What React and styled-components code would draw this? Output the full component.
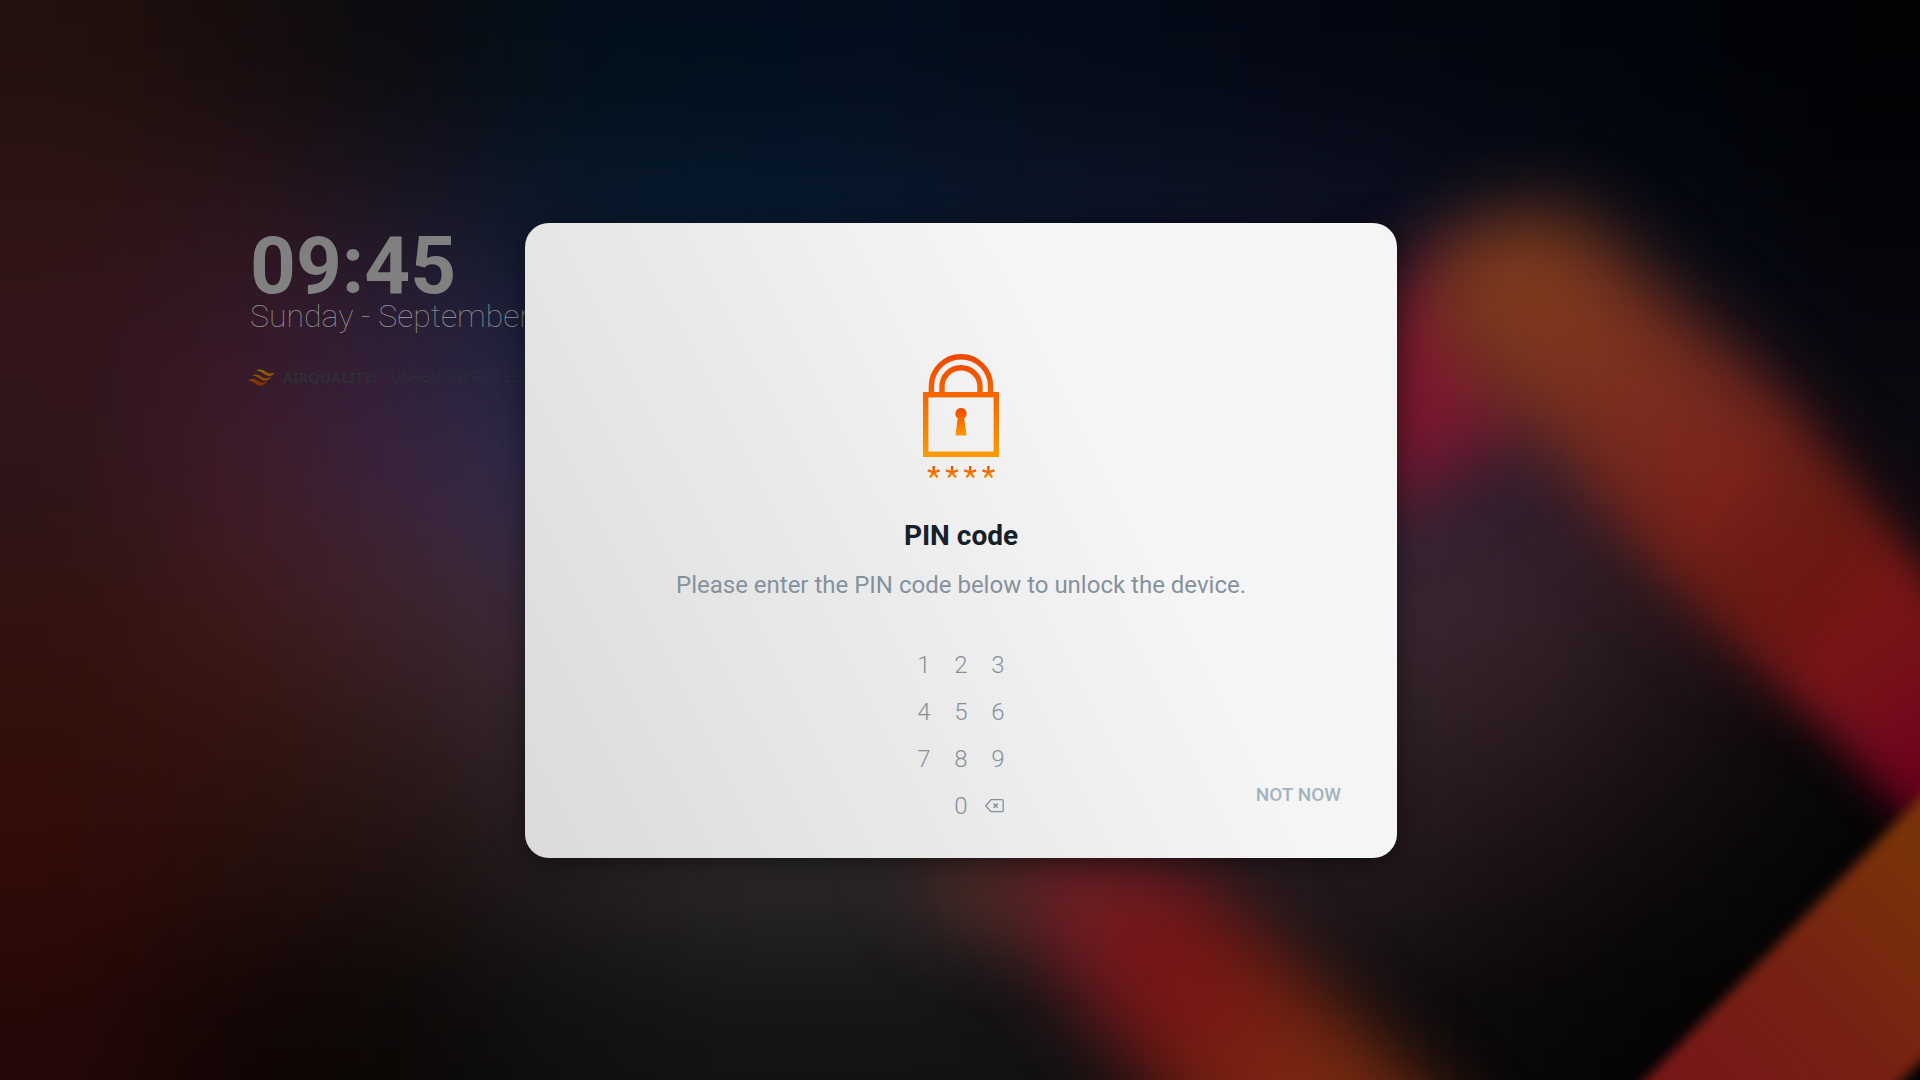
import React, { useState } from 'react';
import styled, { createGlobalStyle } from 'styled-components';

const GlobalStyle = createGlobalStyle`
  * {
    box-sizing: border-box;
  }

  body {
    margin: 0;
    background: #050405;
    font-family: Roboto, sans-serif;
  }
`;

const Screen = styled.div`
  position: relative;
  min-height: 100vh;
  overflow: hidden;
`;

const Wallpaper = styled.svg`
  position: absolute;
  inset: 0;
  width: 100%;
  height: 100%;
`;

const StatusPanel = styled.header`
  position: relative;
  padding: 226px 250px 0;
  white-space: nowrap;
`;

const Clock = styled.time`
  display: block;
  font-size: 80px;
  font-weight: 700;
  line-height: 72px;
  padding: 4px 0 0;
  color: #808080;
`;

const Today = styled.p`
  margin: 0;
  font-size: 32px;
  font-weight: 100;
  line-height: 28px;
  color: #8c8c8c;
`;

const AirQuality = styled.div`
  display: flex;
  align-items: center;
  margin-top: 35px;
  margin-left: -3px;
  font-family: 'Noto Sans', sans-serif;
  line-height: 24px;
  color: #2c3038;
`;

const AirLabel = styled.strong`
  margin: 0 14px 0 8px;
  font-size: 15px;
  font-weight: 600;
`;

const AirValue = styled.span`
  font-size: 14px;
  font-weight: 300;
`;

const Overlay = styled.main`
  position: absolute;
  inset: 0;
  display: flex;
  align-items: center;
  justify-content: center;
  padding: 1px 0 0 2px;
`;

const Dialog = styled.section`
  display: flex;
  flex-direction: column;
  align-items: center;
  width: 100%;
  max-width: 872px;
  padding: 131px 0 29px;
  border-radius: 24px;
  background: linear-gradient(63deg, #dadada 0%, #e8e8e8 34%, #f5f5f5 66%);
  box-shadow: 0 4px 30px rgba(0, 0, 0, 0.5);
`;

const Title = styled.h1`
  margin: 42px 0 0;
  font-size: 28px;
  font-weight: 700;
  line-height: 32px;
  color: #17202a;
`;

const Description = styled.p`
  margin: 19px 0 0;
  font-size: 24px;
  line-height: 28px;
  text-align: center;
  color: #85929e;
`;

const DialogFooter = styled.div`
  display: grid;
  grid-template-columns: 1fr auto 1fr;
  width: 100%;
  margin-top: 42px;
`;

const Keypad = styled.div`
  display: grid;
  grid-template-columns: repeat(3, 37px);
  grid-column: 2;
`;

const Key = styled.button`
  display: flex;
  align-items: center;
  justify-content: center;
  height: 47px;
  padding: 0;
  border: none;
  background: none;
  font-family: inherit;
  font-size: 24px;
  font-weight: 300;
  line-height: 28px;
  color: #85929e;
  cursor: pointer;
`;

const ZeroKey = styled(Key)`
  grid-column: 2;
`;

const DeleteKey = styled(Key)`
  justify-content: flex-end;
  padding-right: 13px;
`;

const DismissButton = styled.button`
  align-self: end;
  justify-self: end;
  margin: 0 56px 22px 0;
  padding: 0;
  border: none;
  background: none;
  font-family: inherit;
  font-size: 19px;
  font-weight: 500;
  line-height: 24px;
  color: #a5b3c1;
  cursor: pointer;
`;

const DIGITS = [1, 2, 3, 4, 5, 6, 7, 8, 9];

// Twelve by eight colour patches, blurred together into the wallpaper base
const PATCHES = [
  ['22110d', '170d0d', '0b0b10', '02101a', '020e1c', '030e1e', '040b18', '040916', '040711', '02060e', '01040a', '010204'],
  ['2f1413', '2a151a', '1b1524', '081829', '051a2e', '08182c', '0c1528', '0e1325', '0c1020', '080c18', '050811', '020408'],
  ['32151a', '37182a', '2e2038', '1a2240', '101e3a', '0e1a34', '0e1730', '10142a', '12142a', '181426', '0c0e18', '07080f'],
  ['2e161a', '3f1c2a', '3a2440', '2e2c4c', '2a2a48', '2a2840', '282438', '2a2034', '2e2034', '2f1f30', '1c141e', '0e0a12'],
  ['32130f', '3d1a1a', '3e242c', '3b2b3e', '34283a', '342834', '342630', '382832', '3c2a36', '36222c', '24161c', '100b0c'],
  ['330f0b', '32130e', '2e1a1a', '31252b', '30282e', '302a2e', '30282c', '2f2228', '2e1f25', '2a1a20', '180f12', '080607'],
  ['320b08', '240f0c', '1d1110', '221b1c', '2c282a', '2c282a', '241e20', '261c20', '241a1e', '180f12', '0c090a', '040404'],
  ['240807', '110504', '0b0806', '101010', '141213', '141213', '131112', '121010', '0f0d0d', '090707', '040303', '030303'],
];

function Patches() {
  return PATCHES.map((row, rowIndex) =>
    row.map((color, colIndex) => {
      const left = colIndex === 0 ? -300 : colIndex * 160;
      const right = colIndex === 11 ? 2220 : (colIndex + 1) * 160;
      const top = rowIndex === 0 ? -300 : rowIndex * 135;
      const bottom = rowIndex === 7 ? 1380 : (rowIndex + 1) * 135;
      return (
        <rect
          key={`${rowIndex}-${colIndex}`}
          x={left}
          y={top}
          width={right - left}
          height={bottom - top}
          fill={`#${color}`}
          shapeRendering="crispEdges"
        />
      );
    })
  );
}

function Background() {
  return (
    <Wallpaper viewBox="0 0 1920 1080" preserveAspectRatio="xMidYMid slice" aria-hidden="true">
      <defs>
        <filter id="haze" filterUnits="userSpaceOnUse" x="-300" y="-300" width="2520" height="1680" colorInterpolationFilters="sRGB">
          <feGaussianBlur stdDeviation="66" />
        </filter>
        <filter id="soft" filterUnits="userSpaceOnUse" x="600" y="0" width="1600" height="1400" colorInterpolationFilters="sRGB">
          <feGaussianBlur stdDeviation="38" />
        </filter>
        <filter id="mid" filterUnits="userSpaceOnUse" x="600" y="0" width="1600" height="1400" colorInterpolationFilters="sRGB">
          <feGaussianBlur stdDeviation="20" />
        </filter>
        <filter id="edge" filterUnits="userSpaceOnUse" x="1300" y="500" width="900" height="900" colorInterpolationFilters="sRGB">
          <feGaussianBlur stdDeviation="6" />
        </filter>
        <linearGradient id="ribbon" gradientUnits="userSpaceOnUse" x1="1540" y1="240" x2="1925" y2="790">
          <stop offset="0" stopColor="#803c1c" />
          <stop offset="0.3" stopColor="#7c2c20" />
          <stop offset="0.62" stopColor="#781b14" />
          <stop offset="0.82" stopColor="#76121a" />
          <stop offset="1" stopColor="#6c001c" />
        </linearGradient>
        <linearGradient id="corner" gradientUnits="userSpaceOnUse" x1="1920" y1="860" x2="1680" y2="1090">
          <stop offset="0" stopColor="#7a320a" />
          <stop offset="0.5" stopColor="#762212" />
          <stop offset="1" stopColor="#771719" />
        </linearGradient>
        <linearGradient id="lower" gradientUnits="userSpaceOnUse" x1="1040" y1="880" x2="1330" y2="1080">
          <stop offset="0" stopColor="#6e2226" />
          <stop offset="0.4" stopColor="#76151a" />
          <stop offset="0.55" stopColor="#761814" />
          <stop offset="1" stopColor="#7a2a10" />
        </linearGradient>
        <linearGradient id="fade" gradientUnits="userSpaceOnUse" x1="1600" y1="400" x2="1860" y2="620">
          <stop offset="0" stopColor="#000" />
          <stop offset="1" stopColor="#fff" />
        </linearGradient>
        <mask id="near" maskUnits="userSpaceOnUse" x="0" y="0" width="1920" height="1080">
          <rect width="1920" height="1080" fill="url(#fade)" />
        </mask>
        <linearGradient id="fadeBack" gradientUnits="userSpaceOnUse" x1="1720" y1="500" x2="1900" y2="650">
          <stop offset="0" stopColor="#fff" />
          <stop offset="1" stopColor="#000" />
        </linearGradient>
        <mask id="far" maskUnits="userSpaceOnUse" x="0" y="0" width="1920" height="1080">
          <rect width="1920" height="1080" fill="url(#fadeBack)" />
        </mask>
      </defs>

      <g filter="url(#haze)">
        <Patches />
      </g>

      <g filter="url(#soft)">
        <path d="M1360 300L1480 250L1530 420L1430 490L1340 520Z" fill="#7a1830" />
        <path d="M900 850L1010 840L1050 930L960 930Z" fill="#4c2c26" />
      </g>
      <g mask="url(#far)">
        <path
          d="M1430 260Q1500 195 1580 220L1750 375L1920 567L2100 780L2080 1000L1905 812L1779 683L1649 549L1540 440L1450 350Z"
          fill="url(#ribbon)"
          filter="url(#soft)"
        />
      </g>
      <g mask="url(#near)">
        <path
          d="M1425 270Q1500 190 1580 222L1750 375L1920 567L2100 780L2080 1000L1905 812L1779 683L1649 549L1540 440L1440 350Z"
          fill="url(#ribbon)"
          filter="url(#mid)"
        />
      </g>
      <path
        d="M1020 850Q1130 830 1200 880L1330 1000L1410 1080L1600 1280L1320 1280L1140 1070L1040 950Q980 870 1020 850Z"
        fill="url(#lower)"
        filter="url(#soft)"
      />
      <path d="M1912 806L1645 1080L1500 1225L1750 1225L1902 1080L2100 890L2100 620Z" fill="url(#corner)" filter="url(#edge)" />
    </Wallpaper>
  );
}

function AirIcon() {
  return (
    <svg width="28" height="17" viewBox="0 0 28 17" fill="none" aria-hidden="true">
      <defs>
        <linearGradient id="air" x1="0" y1="0" x2="0" y2="17" gradientUnits="userSpaceOnUse">
          <stop offset="0" stopColor="#946c00" />
          <stop offset="1" stopColor="#7d2800" />
        </linearGradient>
      </defs>
      <g fill="url(#air)">
        <path d="M9 2C13-1 16 1 19 3C22 5 25 4 28 4C24 8 21 8 17 5C14 3 12 1 9 2Z" />
        <path d="M5 7C9 4 12 6 15 8C18 10 21 9 25 8C20 13 17 13 13 10C10 8 8 6 5 7Z" />
        <path d="M0 12C5 9 8 10 11 12C14 14 17 14 21 12C17 17 13 18 9 15C6 13 4 11 0 12Z" />
      </g>
    </svg>
  );
}

function LockIcon() {
  return (
    <svg width="76" height="124" viewBox="0 0 76 124" fill="none" aria-hidden="true">
      <defs>
        <linearGradient id="lock" x1="0" y1="0" x2="0" y2="103" gradientUnits="userSpaceOnUse">
          <stop offset="0" stopColor="#f04600" />
          <stop offset="0.35" stopColor="#f46200" />
          <stop offset="1" stopColor="#f89c00" />
        </linearGradient>
        <linearGradient id="keyhole" x1="0" y1="54" x2="0" y2="82" gradientUnits="userSpaceOnUse">
          <stop offset="0" stopColor="#f04600" />
          <stop offset="1" stopColor="#f89c00" />
        </linearGradient>
        <linearGradient id="stars" x1="0" y1="112" x2="0" y2="124" gradientUnits="userSpaceOnUse">
          <stop offset="0" stopColor="#f04600" />
          <stop offset="1" stopColor="#f89000" />
        </linearGradient>
      </defs>
      <g stroke="url(#lock)" strokeWidth="5.4">
        <path d="M8.4 39V32.3a29.6 29.6 0 0 1 59.2 0V39" />
        <path d="M19 39V32.7a19 19 0 0 1 38 0V39" />
        <rect x="2.7" y="40.7" width="70.6" height="59.6" />
      </g>
      <path
        d="M38 54.1a5.6 5.6 0 0 1 3.3 10.1L43.5 81.4h-11l2.2-17.2A5.6 5.6 0 0 1 38 54.1Z"
        fill="url(#keyhole)"
      />
      <g stroke="url(#stars)" strokeWidth="2.4">
        {[10.7, 29, 47.2, 65.4].map((x) => (
          <path key={x} d={`M${x} 118.4l.01-6.4M${x} 118.4l6-2M${x} 118.4l3.8 5.1M${x} 118.4l-3.8 5.1M${x} 118.4l-6-2`} />
        ))}
      </g>
    </svg>
  );
}

function BackspaceIcon() {
  return (
    <svg width="19" height="14" viewBox="0 0 19 14" fill="none" stroke="currentColor" aria-hidden="true">
      <path d="M6 .7h11.2a1 1 0 0 1 1 1v10a1 1 0 0 1-1 1H6L.8 6.7Z" strokeWidth="1.3" strokeLinejoin="round" />
      <path d="M8.6 4.6l4.2 4.2M12.8 4.6L8.6 8.8" strokeWidth="1.5" />
    </svg>
  );
}

export default function App() {
  const [pin, setPin] = useState('');
  const [open, setOpen] = useState(true);

  const addDigit = (digit) => {
    if (pin.length < 4) {
      setPin(pin + digit);
    }
  };

  return (
    <Screen>
      <GlobalStyle />
      <Background />
      <StatusPanel>
        <Clock>09:45</Clock>
        <Today>Sunday - September</Today>
        <AirQuality>
          <AirIcon />
          <AirLabel>AIRQUALITY:</AirLabel>
          <AirValue>UNHEALTHY FOR SENSITIVE</AirValue>
        </AirQuality>
      </StatusPanel>
      {open && (
        <Overlay>
          <Dialog role="dialog" aria-labelledby="pin-title">
            <LockIcon />
            <Title id="pin-title">PIN code</Title>
            <Description>Please enter the PIN code below to unlock the device.</Description>
            <DialogFooter>
              <Keypad>
                {DIGITS.map((digit) => (
                  <Key key={digit} type="button" onClick={() => addDigit(digit)}>
                    {digit}
                  </Key>
                ))}
                <ZeroKey type="button" onClick={() => addDigit(0)}>0</ZeroKey>
                <DeleteKey type="button" aria-label="Delete" onClick={() => setPin(pin.slice(0, -1))}>
                  <BackspaceIcon />
                </DeleteKey>
              </Keypad>
              <DismissButton type="button" onClick={() => setOpen(false)}>NOT NOW</DismissButton>
            </DialogFooter>
          </Dialog>
        </Overlay>
      )}
    </Screen>
  );
}
